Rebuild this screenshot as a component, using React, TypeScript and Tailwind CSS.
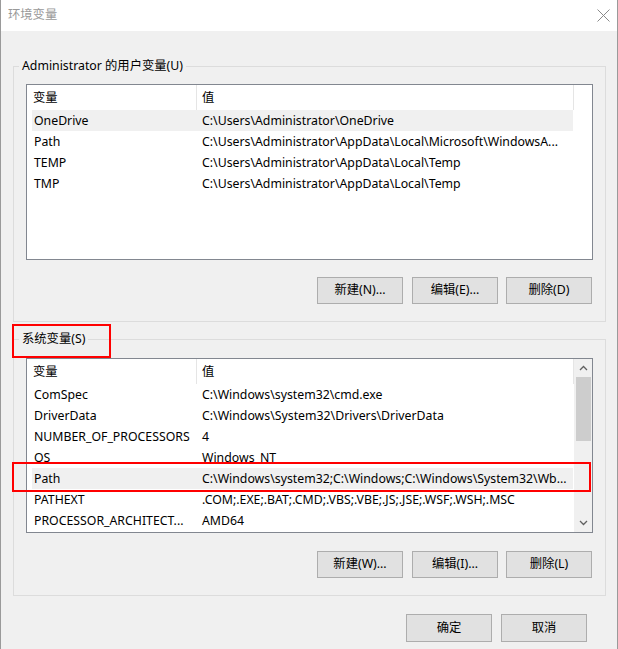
type Row = { name: string; value: string; selected?: boolean };

const userRows: Row[] = [
  { name: 'OneDrive', value: 'C:\\Users\\Administrator\\OneDrive', selected: true },
  { name: 'Path', value: 'C:\\Users\\Administrator\\AppData\\Local\\Microsoft\\WindowsA...' },
  { name: 'TEMP', value: 'C:\\Users\\Administrator\\AppData\\Local\\Temp' },
  { name: 'TMP', value: 'C:\\Users\\Administrator\\AppData\\Local\\Temp' },
];

const systemRows: Row[] = [
  { name: 'ComSpec', value: 'C:\\Windows\\system32\\cmd.exe' },
  { name: 'DriverData', value: 'C:\\Windows\\System32\\Drivers\\DriverData' },
  { name: 'NUMBER_OF_PROCESSORS', value: '4' },
  { name: 'OS', value: 'Windows_NT' },
  { name: 'Path', value: 'C:\\Windows\\system32;C:\\Windows;C:\\Windows\\System32\\Wb...', selected: true },
  { name: 'PATHEXT', value: '.COM;.EXE;.BAT;.CMD;.VBS;.VBE;.JS;.JSE;.WSF;.WSH;.MSC' },
  { name: 'PROCESSOR_ARCHITECT...', value: 'AMD64' },
];

function Button({ label, className = '' }: { label: string; className?: string }) {
  return (
    <div
      className={`w-[86px] h-[27px] flex items-center justify-center bg-[#e1e1e1] border border-[#adadad] text-black ${className}`}
    >
      {label}
    </div>
  );
}

function Header() {
  return (
    <div className="flex h-[25px] w-[547px] bg-white">
      <div className="w-[170px] flex items-center pt-[1px] pl-[6px] border-r border-[#e5e5e5]">变量</div>
      <div className="w-[377px] flex items-center pt-[1px] pl-[5px] border-r border-[#e5e5e5]">值</div>
    </div>
  );
}

function Rows({ rows }: { rows: Row[] }) {
  return (
    <div className="flex flex-col">
      {rows.map((r) => (
        <div
          key={r.name}
          className={`flex items-center h-[21px] pt-[1px] ml-[5px] w-[541px] whitespace-nowrap ${r.selected ? 'bg-[#f0f0f0]' : ''}`}
        >
          <div className="w-[164px] pl-[2px] overflow-hidden">{r.name}</div>
          <div className="flex-1 pl-[6px] overflow-hidden">{r.value}</div>
        </div>
      ))}
    </div>
  );
}

function Chevron({ up }: { up?: boolean }) {
  return (
    <svg width="9" height="6" viewBox="0 0 9 6" className="block">
      <polyline
        points={up ? '1,5 4.5,1.5 8,5' : '1,1 4.5,4.5 8,1'}
        fill="none"
        stroke="#606060"
        strokeWidth="1.3"
      />
    </svg>
  );
}

export default function App() {
  return (
    <div className="relative w-[618px] h-[649px] bg-[#f0f0f0] border-x border-[#9a9a9a] overflow-hidden text-[12.3px] text-black font-['Noto_Sans','Noto_Sans_CJK_SC',sans-serif]">
      {/* Title bar */}
      <div className="h-[31px] bg-white flex items-center justify-between pl-[7px] pr-[7px]">
        <span className="text-[#999999]">环境变量</span>
        <svg width="13" height="13" viewBox="0 0 13 13">
          <path d="M0.5 0.5 L12.5 12.5 M12.5 0.5 L0.5 12.5" stroke="#8a8a8a" strokeWidth="1" />
        </svg>
      </div>

      {/* User variables */}
      <fieldset className="ml-[12px] mt-[27px] w-[592px] border border-[#dcdcdc] p-0 m-0">
        <legend className="ml-[5px] px-[3px] leading-4">Administrator 的用户变量(U)</legend>
        <div className="px-[12px] pb-[17px]">
          <div className="mt-[10px] w-[567px] h-[176px] bg-white border border-[#828790] overflow-hidden">
            <Header />
            <Rows rows={userRows} />
          </div>
          <div className="flex justify-end mt-[17px] pr-[1px]">
            <Button label="新建(N)..." />
            <Button label="编辑(E)..." className="ml-[9px]" />
            <Button label="删除(D)" className="ml-[8px]" />
          </div>
        </div>
      </fieldset>

      {/* System variables */}
      <fieldset className="ml-[12px] mt-[9px] w-[592px] border border-[#dcdcdc] p-0 m-0">
        <legend className="ml-[5px] px-[3px] leading-4">系统变量(S)</legend>
        <div className="px-[12px] pb-[17px]">
          <div className="mt-[11px] w-[567px] h-[175px] bg-white border border-[#828790] overflow-hidden flex">
            <div className="w-[547px] overflow-hidden">
              <Header />
              <Rows rows={systemRows} />
            </div>
            <div className="w-[18px] bg-[#f0f0f0] flex flex-col items-center">
              <div className="h-[18px] w-full flex items-center justify-center">
                <Chevron up />
              </div>
              <div className="w-[15px] h-[64px] bg-[#cdcdcd]" />
              <div className="flex-1" />
              <div className="h-[18px] w-full flex items-center justify-center">
                <Chevron />
              </div>
            </div>
          </div>
          <div className="flex justify-end mt-[18px] pr-[1px]">
            <Button label="新建(W)..." />
            <Button label="编辑(I)..." className="ml-[9px]" />
            <Button label="删除(L)" className="ml-[8px]" />
          </div>
        </div>
      </fieldset>

      {/* Dialog buttons */}
      <div className="flex justify-end pr-[30px] mt-[18px]">
        <Button label="确定" className="h-[28px]" />
        <Button label="取消" className="h-[28px] ml-[9px]" />
      </div>

      {/* Red annotation boxes */}
      <div className="absolute left-[11px] top-[324px] w-[99px] h-[34px] border-2 border-[#ff0000]" />
      <div className="absolute left-[11px] top-[462px] w-[579px] h-[30px] border-2 border-[#ff0000]" />
    </div>
  );
}
